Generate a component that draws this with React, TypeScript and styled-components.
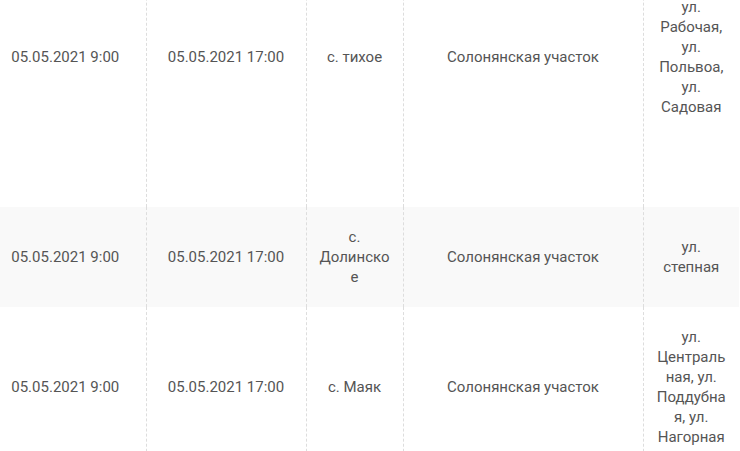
import * as React from 'react';
import styled, { createGlobalStyle } from 'styled-components';

interface IOutage {
  start: string;
  end: string;
  place: string;
  area: string;
  streets: string;
  height?: number;
}

const columns = [161, 160, 97, 240, 96];

const outages: IOutage[] = [
  {
    start: '05.05.2021 9:00',
    end: '05.05.2021 17:00',
    place: 'с. тихое',
    area: 'Солонянская участок',
    streets: 'ул. Рабочая, ул. Польвоа, ул. Садовая',
    height: 300,
  },
  {
    start: '05.05.2021 9:00',
    end: '05.05.2021 17:00',
    place: 'с. Долинское',
    area: 'Солонянская участок',
    streets: 'ул. степная',
  },
  {
    start: '05.05.2021 9:00',
    end: '05.05.2021 17:00',
    place: 'с. Маяк',
    area: 'Солонянская участок',
    streets: 'ул. Центральная, ул. Поддубная, ул. Нагорная',
  },
];

const GlobalStyle = createGlobalStyle`
  html, body {
    margin: 0;
    padding: 0;
    background: #fff;
  }
`;

const Viewport = styled.div`
  width: 740px;
  height: 451px;
  overflow: hidden;
`;

// the table is scrolled a little inside its container
const Table = styled.table`
  margin: -93px 0 0 -15px;
  border-collapse: collapse;
  table-layout: fixed;
  width: 754px;

  font-family: Roboto, "Noto Sans", sans-serif;
  font-size: 15px;
  line-height: 20px;
  color: #555;
`;

const Column = styled.col<{ $width: number }>`
  width: ${p => p.$width}px;
`;

const Row = styled.tr<{ $striped: boolean; $height?: number }>`
  background: ${p => (p.$striped ? '#f9f9f9' : '#fff')};
  height: ${p => (p.$height ? `${p.$height}px` : 'auto')};
`;

const Cell = styled.td`
  padding: 20px 12px;
  text-align: center;
  vertical-align: middle;
  overflow-wrap: anywhere;

  & + & {
    border-left: 1px dashed #ddd;
  }
`;

const App = () => (
  <Viewport>
    <GlobalStyle />
    <Table>
      <colgroup>
        {columns.map((w, i) => (
          <Column key={i} $width={w} />
        ))}
      </colgroup>
      <tbody>
        {outages.map((o, i) => (
          <Row key={i} $striped={i % 2 === 1} $height={o.height}>
            <Cell>{o.start}</Cell>
            <Cell>{o.end}</Cell>
            <Cell>{o.place}</Cell>
            <Cell>{o.area}</Cell>
            <Cell>{o.streets}</Cell>
          </Row>
        ))}
      </tbody>
    </Table>
  </Viewport>
);

export default App;
